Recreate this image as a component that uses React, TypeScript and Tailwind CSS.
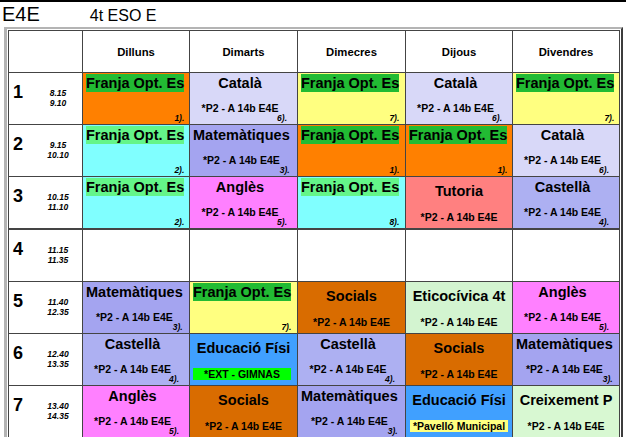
import React from 'react';

type Slot = {
  title: string;
  bg: string;
  hl?: string;
  sub?: string;
  box?: { text: string; cls: string; inline?: boolean };
  note?: string;
};

const days = ['Dilluns', 'Dimarts', 'Dimecres', 'Dijous', 'Divendres'];

const times = [
  ['8.15', '9.10'],
  ['9.15', '10.10'],
  ['10.15', '11.10'],
  ['11.15', '11.35'],
  ['11.40', '12.35'],
  ['12.40', '13.35'],
  ['13.40', '14.35'],
];

const SUB = '*P2 - A 14b E4E';
const FRANJA = 'Franja Opt. Es';

const franjaOrange = (note: string): Slot => ({ title: FRANJA, bg: 'bg-[#ff8000]', hl: 'bg-[#22bb33]', note });
const franjaYellow = (note: string): Slot => ({ title: FRANJA, bg: 'bg-[#ffff80]', hl: 'bg-[#22bb33]', note });
const franjaCyan = (note: string): Slot => ({ title: FRANJA, bg: 'bg-[#80ffff]', hl: 'bg-[#64f589]', note });
const catala: Slot = { title: 'Català', bg: 'bg-[#d8d8f8]', sub: SUB, note: '6).' };
const mates: Slot = { title: 'Matemàtiques', bg: 'bg-[#a4a4f0]', sub: SUB, note: '3).' };
const angles: Slot = { title: 'Anglès', bg: 'bg-[#ff80ff]', sub: SUB, note: '5).' };
const castella: Slot = { title: 'Castellà', bg: 'bg-[#adb0f2]', sub: SUB, note: '4).' };
const socials: Slot = { title: 'Socials', bg: 'bg-[#d96c00]', sub: SUB };

const grid: (Slot | null)[][] = [
  [franjaOrange('1).'), catala, franjaYellow('7).'), catala, franjaYellow('7).')],
  [franjaCyan('2).'), mates, franjaOrange('1).'), franjaOrange('1).'), catala],
  [franjaCyan('2).'), angles, franjaCyan('8).'), { title: 'Tutoria', bg: 'bg-[#ff8080]', sub: SUB }, castella],
  [null, null, null, null, null],
  [mates, franjaYellow('7).'), socials, { title: 'Eticocívica 4t', bg: 'bg-[#d3f4d0]', sub: SUB }, angles],
  [
    castella,
    { title: 'Educació Físi', bg: 'bg-[#40a0ff]', box: { text: '*EXT - GIMNAS', cls: 'bg-[#00ff00]' } },
    castella,
    socials,
    mates,
  ],
  [
    angles,
    socials,
    mates,
    { title: 'Educació Físi', bg: 'bg-[#40a0ff]', box: { text: '*Pavelló Municipal', cls: 'bg-[#ffff80]', inline: true } },
    { title: 'Creixement P', bg: 'bg-[#d8f8d2]', sub: SUB },
  ],
];

const Cell: React.FC<{ c: Slot | null }> = ({ c }) => {
  if (!c) return <div className="bg-white" />;
  return (
    <div className={`${c.bg} flex flex-col justify-center ${c.note ? 'pl-[3px] pr-[10px]' : 'px-[3px]'}`}>
      <div className="min-w-full w-max">
        <div className="text-center text-[14.5px] leading-[18px] font-bold whitespace-nowrap">
          {c.hl ? <span className={`inline-block ${c.hl}`}>{c.title}</span> : c.title}
        </div>
        {c.box && !c.box.inline ? (
          <div className={`mt-[10.5px] mr-[3px] h-[12px] ${c.box.cls} text-center text-[10.5px] leading-[12px] font-bold whitespace-nowrap`}>
            {c.box.text}
          </div>
        ) : (
          <div className="mt-[10.5px] h-[12px] text-center text-[10.5px] leading-[12px] font-bold whitespace-nowrap">
            {c.box ? <span className={`inline-block px-[3px] ${c.box.cls}`}>{c.box.text}</span> : c.sub}
          </div>
        )}
        {c.note && <div className="text-right text-[8.5px] leading-[9px] font-bold italic">{c.note}</div>}
      </div>
    </div>
  );
};

const cols = 'grid grid-cols-[73px_106px_107px_107px_106px_106px] gap-px';

export default function App() {
  return (
    <div className="w-[626px] h-[437px] overflow-hidden bg-white text-black font-['Liberation_Sans',Arial,sans-serif]">
      <div className="h-[2px] bg-black" />
      <div className="h-[25px] flex items-baseline pt-[2px] pl-[2px] leading-none">
        <span className="text-[20px] leading-[20px]">E4E</span>
        <span className="ml-[50px] text-[16px] leading-[20px]">4t ESO E</span>
      </div>

      <div className="ml-[4px] w-[619px] border-l-[3px] border-t-2 border-r-2 border-b border-l-[#b4b4b4] border-t-[#b4b4b4] border-r-[#3c3c3c] border-b-[#3c3c3c] p-px bg-white">
        <div className="bg-[#444] p-px flex flex-col gap-px">
          {/* day headers */}
          <div className={`${cols} h-[41px]`}>
            <div className="bg-white" />
            {days.map((d) => (
              <div key={d} className="bg-white flex items-center justify-center pt-[2px] text-[11.3px] font-bold">
                {d}
              </div>
            ))}
          </div>

          {grid.map((row, i) => (
            <div key={i} className={`${cols} h-[51px] ${i === 3 ? 'mt-px' : ''}`}>
              <div className="bg-white flex items-start pl-[4px]">
                <span className="w-[30px] pt-[10px] text-[18px] leading-[18px] font-bold">{i + 1}</span>
                <div className="w-[30px] pt-[14.5px] text-center text-[8.5px] leading-[10px] font-bold italic">
                  <div>{times[i][0]}</div>
                  <div>{times[i][1]}</div>
                </div>
              </div>
              {row.map((c, j) => (
                <Cell key={j} c={c} />
              ))}
            </div>
          ))}
        </div>
      </div>
    </div>
  );
}
